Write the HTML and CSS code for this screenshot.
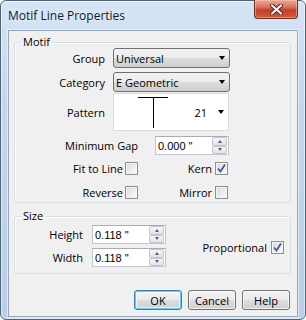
FILE: index.html
```html
<!DOCTYPE html>
<html>
<head>
    <meta name="viewport" content="width=device-width, initial-scale=1.0">
    <link rel="stylesheet" href="styles.css">
</head>
<body>
    <div class="window">
        <div class="titlebar">
            <span class="title">Motif Line Properties</span>
            <div class="close-btn">
                <svg width="13" height="11" viewBox="0 0 13 11">
                    <path d="M2 1.5 L11 9.5 M11 1.5 L2 9.5" stroke="#5a1a10" stroke-width="4" stroke-linecap="round"/>
                    <path d="M2 1.5 L11 9.5 M11 1.5 L2 9.5" stroke="#ffffff" stroke-width="2.2" stroke-linecap="round"/>
                </svg>
            </div>
        </div>

        <div class="client">
            <fieldset class="group motif">
                <legend>Motif</legend>

                <div class="row first">
                    <label class="lbl lbl-main">Group</label>
                    <div class="combo">
                        <span>Universal</span>
                        <span class="arrow"></span>
                    </div>
                </div>

                <div class="row second">
                    <label class="lbl lbl-main">Category</label>
                    <div class="combo">
                        <span>E Geometric</span>
                        <span class="arrow"></span>
                    </div>
                </div>

                <div class="row pattern-row">
                    <label class="lbl lbl-main">Pattern</label>
                    <div class="pattern">
                        <svg class="pattern-glyph" width="31" height="32" viewBox="0 0 31 32">
                            <path d="M0 0.5 H30 M15.5 0.5 V31" stroke="#000" stroke-width="1" fill="none"/>
                        </svg>
                        <span class="pattern-num">21</span>
                        <span class="arrow"></span>
                    </div>
                </div>

                <div class="row gap-row">
                    <label class="lbl lbl-gap">Minimum Gap</label>
                    <div class="spin">
                        <span class="spin-text">0.000 "</span>
                        <div class="spin-btns">
                            <span class="spin-btn"><i class="up"></i></span>
                            <span class="spin-btn"><i class="down"></i></span>
                        </div>
                    </div>
                </div>

                <div class="row check-row first-check">
                    <label class="lbl lbl-cb1">Fit to Line</label>
                    <span class="checkbox"></span>
                    <label class="lbl lbl-cb2">Kern</label>
                    <span class="checkbox checked">
                        <svg width="11" height="11" viewBox="0 0 11 11"><path d="M2 5.5 L4.5 8.5 L9 1.5" stroke="#3d5a9c" stroke-width="1.8" fill="none"/></svg>
                    </span>
                </div>

                <div class="row check-row second-check">
                    <label class="lbl lbl-cb1">Reverse</label>
                    <span class="checkbox"></span>
                    <label class="lbl lbl-cb2">Mirror</label>
                    <span class="checkbox"></span>
                </div>
            </fieldset>

            <fieldset class="group size">
                <legend>Size</legend>
                <div class="size-body">
                    <div class="size-fields">
                        <div class="row">
                            <label class="lbl lbl-size">Height</label>
                            <div class="spin">
                                <span class="spin-text">0.118 "</span>
                                <div class="spin-btns">
                                    <span class="spin-btn"><i class="up"></i></span>
                                    <span class="spin-btn"><i class="down"></i></span>
                                </div>
                            </div>
                        </div>
                        <div class="row size-second">
                            <label class="lbl lbl-size">Width</label>
                            <div class="spin">
                                <span class="spin-text">0.118 "</span>
                                <div class="spin-btns">
                                    <span class="spin-btn"><i class="up"></i></span>
                                    <span class="spin-btn"><i class="down"></i></span>
                                </div>
                            </div>
                        </div>
                    </div>
                    <div class="proportional">
                        <label class="lbl">Proportional</label>
                        <span class="checkbox checked">
                            <svg width="11" height="11" viewBox="0 0 11 11"><path d="M2 5.5 L4.5 8.5 L9 1.5" stroke="#3d5a9c" stroke-width="1.8" fill="none"/></svg>
                        </span>
                    </div>
                </div>
            </fieldset>

            <div class="buttons">
                <button class="btn default">OK</button>
                <button class="btn">Cancel</button>
                <button class="btn">Help</button>
            </div>
        </div>
    </div>
</body>
</html>
```

FILE: styles.css
```css
html, body {
    margin: 0;
    padding: 0;
    background: #ffffff;
    font-family: "Open Sans", Arial, sans-serif;
    font-size: 11px;
    color: #000;
}

.window {
    width: 306px;
    height: 320px;
    box-sizing: border-box;
    border: 1px solid #4f6379;
    border-radius: 6px;
    background: linear-gradient(180deg, #d6e5f5 0%, #c3d8ee 30%, #b8cfe7 100%);
    box-shadow: inset 0 0 0 1px rgba(255, 255, 255, 0.55);
    padding: 0 7px 6px 7px;
    display: flex;
    flex-direction: column;
}

.titlebar {
    height: 29px;
    display: flex;
    justify-content: space-between;
    align-items: flex-start;
    flex-shrink: 0;
}

.title {
    font-size: 12px;
    line-height: 16px;
    margin-top: 7px;
    color: #0c1a2c;
    text-shadow: 0 0 6px rgba(255, 255, 255, 0.9);
}

.close-btn {
    width: 44px;
    height: 19px;
    margin-top: -1px;
    box-sizing: border-box;
    border: 1px solid #6e2d22;
    border-top: none;
    border-radius: 0 0 4px 4px;
    background: linear-gradient(180deg, #e9a897 0%, #d8735c 40%, #c2402a 55%, #cf5a40 100%);
    box-shadow: inset 0 0 0 1px rgba(255, 210, 200, 0.45);
    display: flex;
    justify-content: center;
    align-items: center;
}

.client {
    flex: 1;
    background: #f0f0f0;
    border: 1px solid #96a7bb;
    box-shadow: 0 0 0 1px rgba(255, 255, 255, 0.5);
    padding: 5px 6px 6px 5px;
    display: flex;
    flex-direction: column;
}

/* group boxes */
.group {
    margin: 0;
    padding: 0 0 2px 0;
    border: 1px solid #d5dfe5;
    border-radius: 3px;
    box-shadow: inset 1px 1px 0 #fff;
    min-width: 0;
}

.group legend {
    margin-left: 6px;
    padding: 0 2px;
    line-height: 12px;
    font-size: 11px;
}

.size {
    margin-top: 7px;
    padding-bottom: 6px;
}

.row {
    display: flex;
    align-items: center;
}

.lbl {
    text-align: right;
    white-space: nowrap;
}

.lbl-main { width: 90px; margin-right: 8px; }
.lbl-gap { width: 123px; margin-right: 17px; }
.lbl-cb1 { width: 108px; margin-right: 2px; }
.lbl-cb2 { width: 74px; margin-right: 3px; }
.lbl-size { width: 68px; margin-right: 9px; }

.second { margin-top: 4px; }
.pattern-row { margin-top: 1px; }
.gap-row { margin-top: 5px; }
.first-check { margin-top: 6px; }
.second-check { margin-top: 9px; }

/* combo boxes */
.combo {
    width: 117px;
    height: 20px;
    box-sizing: border-box;
    border: 1px solid #707070;
    border-radius: 3px;
    background: linear-gradient(180deg, #f2f2f2 0%, #ebebeb 50%, #dddddd 51%, #cfcfcf 100%);
    display: flex;
    align-items: center;
    justify-content: space-between;
    padding: 0 4px 0 2px;
}

.arrow {
    width: 0;
    height: 0;
    border-left: 3.5px solid transparent;
    border-right: 3.5px solid transparent;
    border-top: 4px solid #000;
}

.pattern {
    width: 116px;
    height: 38px;
    box-sizing: border-box;
    border: 1px solid #dcdcdc;
    background: #fff;
    display: flex;
    align-items: center;
    padding: 0 4px 0 24px;
}

.pattern-glyph {
    align-self: flex-start;
    margin-top: 3px;
}

.pattern-num {
    margin-left: auto;
    margin-right: 11px;
}

/* spin boxes */
.spin {
    width: 74px;
    height: 19px;
    box-sizing: border-box;
    border: 1px solid #c3c6cc;
    border-top-color: #abadb3;
    background: #fff;
    display: flex;
    align-items: center;
    padding: 0 1px 0 2px;
}

.spin-text {
    flex: 1;
    font-family: "Liberation Sans", Arial, sans-serif;
    font-size: 11px;
}

.spin-btns {
    width: 15px;
    height: 17px;
    display: flex;
    flex-direction: column;
}

.spin-btn {
    flex: 1;
    box-sizing: border-box;
    border: 1px solid #c2c5ca;
    border-radius: 2px;
    background: linear-gradient(180deg, #f6f6f6, #e3e3e3);
    display: flex;
    justify-content: center;
    align-items: center;
}

.spin-btn i {
    width: 0;
    height: 0;
    border-left: 2.5px solid transparent;
    border-right: 2.5px solid transparent;
}

.spin-btn .up { border-bottom: 3px solid #4c6192; }
.spin-btn .down { border-top: 3px solid #4c6192; }

/* checkboxes */
.checkbox {
    width: 13px;
    height: 13px;
    box-sizing: border-box;
    border: 1px solid #8e8f8f;
    background: linear-gradient(135deg, #d8d8d8 0%, #f2f2f2 70%, #ffffff 100%);
    box-shadow: inset 0 0 0 1px #f4f4f4;
    display: flex;
    justify-content: center;
    align-items: center;
    flex-shrink: 0;
}

.size-body {
    display: flex;
    align-items: center;
}

.size-fields {
    margin-top: 3px;
}

.size-second { margin-top: 4px; }

.proportional {
    margin-left: auto;
    margin-right: 6px;
    margin-top: 5px;
    display: flex;
    align-items: center;
    gap: 4px;
}

/* dialog buttons */
.buttons {
    display: flex;
    justify-content: flex-end;
    gap: 6px;
    margin-top: 16px;
    margin-right: 1px;
}

.btn {
    width: 48px;
    height: 20px;
    padding: 0;
    font-family: "Open Sans", Arial, sans-serif;
    font-size: 11px;
    color: #000;
    border: 1px solid #707070;
    border-radius: 3px;
    background: linear-gradient(180deg, #f2f2f2 0%, #ebebeb 50%, #dddddd 51%, #cfcfcf 100%);
    box-shadow: inset 0 0 0 1px rgba(255, 255, 255, 0.7);
}

.btn.default {
    border-color: #3c7fb1;
    box-shadow: inset 0 0 0 1px #5fcdf6, inset 0 0 0 2px rgba(255, 255, 255, 0.6);
}
```
